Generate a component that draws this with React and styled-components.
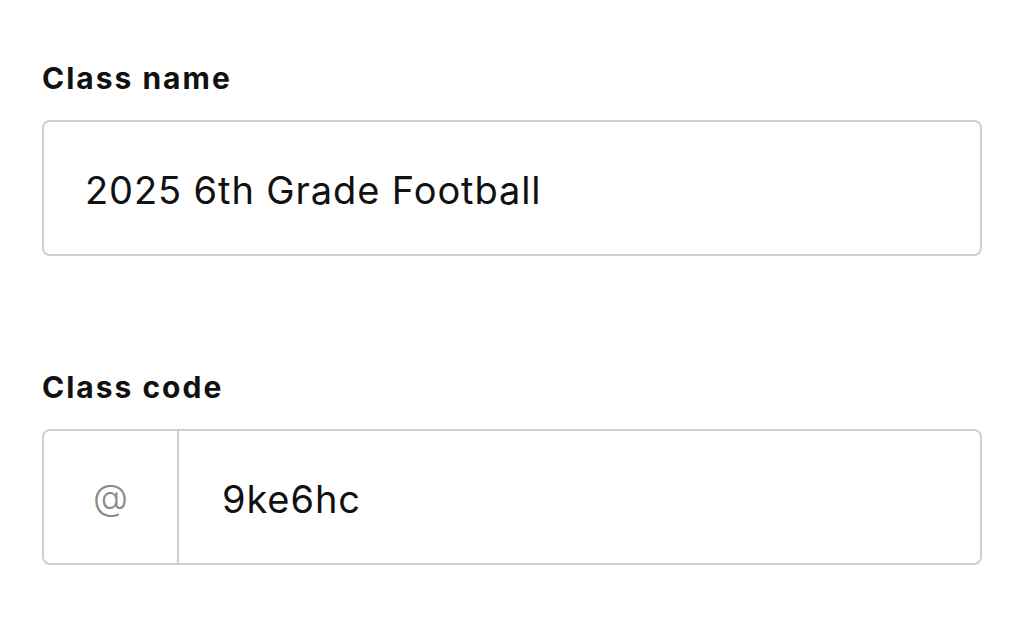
import React from "react";
import styled, { createGlobalStyle } from "styled-components";

const GlobalStyle = createGlobalStyle`
  body {
    margin: 0;
    background: #fff;
    font-family: "Inter", "Noto Sans", sans-serif;
    color: #111;
  }
`;

const Form = styled.div`
  display: flex;
  flex-direction: column;
  gap: 111px;
  padding: 58px 42px 0 42px;
  width: 940px;
`;

const Field = styled.div`
  display: flex;
  flex-direction: column;
  gap: 22px;
`;

const Label = styled.label`
  font-size: 30px;
  font-weight: 700;
  line-height: 40px;
  letter-spacing: 2px;
  color: #111;
`;

const InputBox = styled.div`
  display: flex;
  align-items: stretch;
  height: 136px;
  box-sizing: border-box;
  border: 2px solid #cfcfcf;
  border-radius: 8px;
  overflow: hidden;
`;

const Prefix = styled.div`
  width: 133px;
  flex-shrink: 0;
  display: flex;
  align-items: center;
  justify-content: center;
  border-right: 2px solid #cfcfcf;
  color: #8a8a8a;
  font-size: 36px;
  font-weight: 300;
`;

const Value = styled.div`
  flex: 1;
  display: flex;
  align-items: center;
  padding: 4px 0 0 ${(p) => (p.$withPrefix ? "43px" : "41px")};
  font-size: 38px;
  letter-spacing: 0.9px;
  color: #111;
`;

export default function App() {
  return (
    <>
      <GlobalStyle />
      <Form>
        <Field>
          <Label>Class name</Label>
          <InputBox>
            <Value>2025 6th Grade Football</Value>
          </InputBox>
        </Field>
        <Field>
          <Label>Class code</Label>
          <InputBox>
            <Prefix>@</Prefix>
            <Value $withPrefix>9ke6hc</Value>
          </InputBox>
        </Field>
      </Form>
    </>
  );
}
